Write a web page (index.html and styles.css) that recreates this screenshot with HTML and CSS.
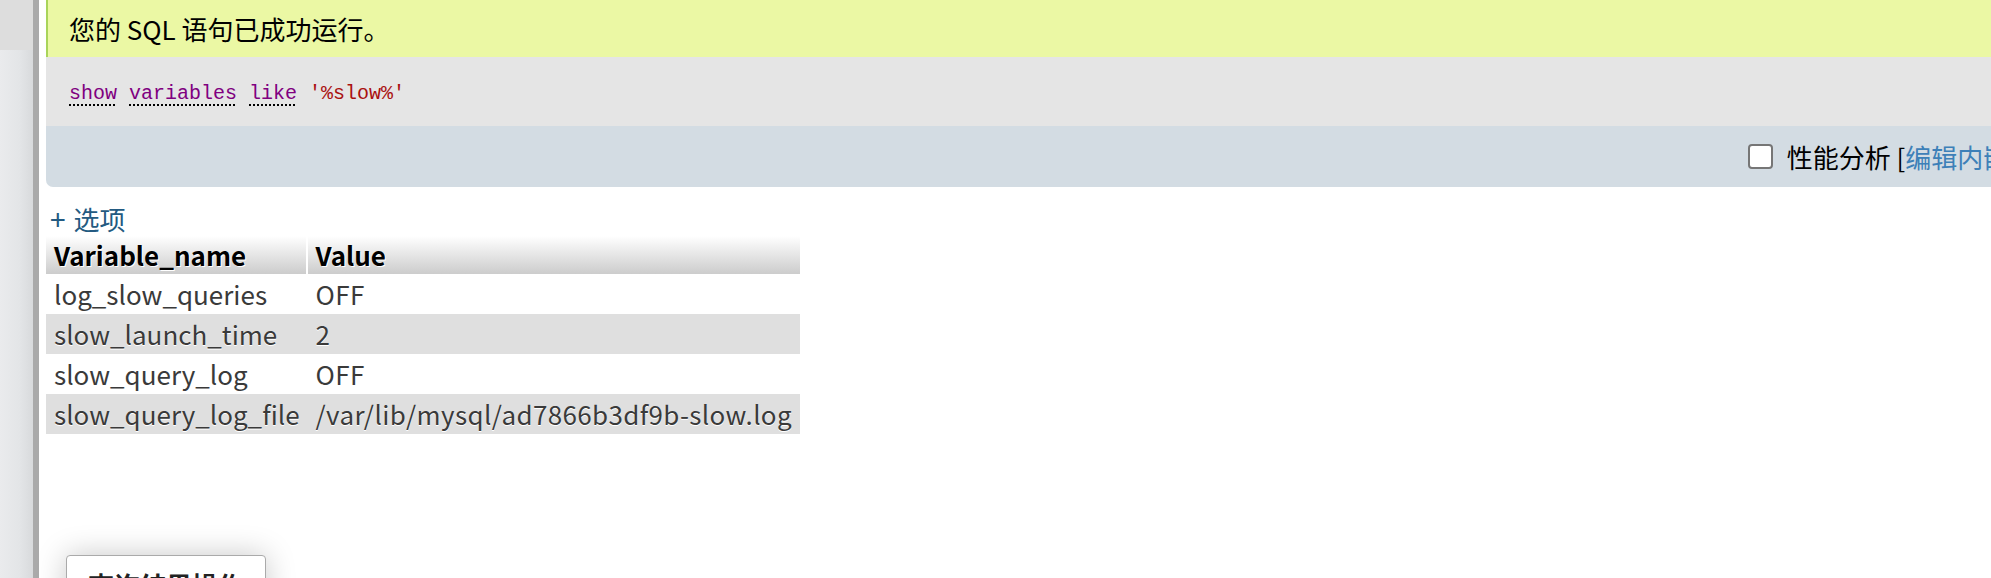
FILE: index.html
```html
<!DOCTYPE html>
<html lang="zh-CN">
<head>
<meta charset="utf-8">
<title>SQL</title>
<link rel="stylesheet" href="styles.css">
</head>
<body>
<div class="nav"><div class="nav-top"></div></div>
<div class="resizer"></div>
<div class="main">
  <div class="success">您的 SQL 语句已成功运行。</div>
  <div class="sqlbox"><span class="kw">show</span> <span class="kw">variables</span> <span class="kw">like</span> <span class="str">'%slow%'</span></div>
  <div class="tools">
    <span class="checkbox"></span>
    <span class="tools-text">性能分析 [<a class="link">编辑内嵌</a>] [<a class="link">编辑</a>] [<a class="link">解析 SQL</a>] [<a class="link">创建 PHP 代码</a>] [<a class="link">刷新</a>]</span>
  </div>
  <div class="options"><span class="plus">+</span>选项</div>
  <table class="result">
    <thead>
      <tr><th>Variable_name</th><th>Value</th></tr>
    </thead>
    <tbody>
      <tr><td>log_slow_queries</td><td>OFF</td></tr>
      <tr class="even"><td>slow_launch_time</td><td>2</td></tr>
      <tr><td>slow_query_log</td><td>OFF</td></tr>
      <tr class="even"><td>slow_query_log_file</td><td>/var/lib/mysql/ad7866b3df9b-slow.log</td></tr>
    </tbody>
  </table>
  <div class="ops"><span class="ops-title">查询结果操作</span></div>
</div>
</body>
</html>
```
FILE: styles.css
```css
html, body {
  margin: 0;
  padding: 0;
}
body {
  width: 1991px;
  height: 578px;
  overflow: hidden;
  display: flex;
  align-items: flex-start;
  background: #fff;
  font-family: "Noto Sans CJK SC", sans-serif;
  color: #000;
}
.nav {
  width: 33px;
  height: 578px;
  flex-shrink: 0;
  background: linear-gradient(to right, #eaebed, #e3e5e7 60%, #d8dadc);
}
.nav-top {
  height: 50px;
  background: #dddddd;
}
.resizer {
  width: 6px;
  height: 578px;
  flex-shrink: 0;
  background: #aaaaaa;
}
.main {
  margin-left: 7px;
  width: 2454px;
  flex-shrink: 0;
}
.success {
  background: #ebf8a4;
  border-left: 2px solid #a9d45a;
  padding: 11px 0 10px 21px;
  font-size: 26px;
  line-height: 36px;
}
.sqlbox {
  background: #e5e5e5;
  padding: 23px 0 18px 23px;
  font-family: "Liberation Mono", monospace;
  font-size: 20px;
  line-height: 28px;
}
.kw {
  color: #800080;
  text-decoration: underline dotted #000;
  text-underline-offset: 5px;
}
.str {
  color: #aa1111;
}
.tools {
  background: #d3dce3;
  height: 61px;
  border-bottom-left-radius: 7px;
  display: flex;
  justify-content: flex-end;
  align-items: center;
  padding-right: 10px;
  white-space: nowrap;
  font-size: 26px;
}
.checkbox {
  width: 21px;
  height: 21px;
  border: 2px solid #767676;
  border-radius: 4px;
  background: #fff;
  margin-right: 14px;
  flex-shrink: 0;
}
.link {
  color: #3d80b8;
}
.options {
  margin-top: 14px;
  padding-left: 4px;
  font-size: 26px;
  line-height: 34px;
  color: #235a81;
}
.plus {
  font-size: 28px;
  margin-right: 8px;
}
.result {
  border-collapse: separate;
  border-spacing: 0;
  font-size: 26px;
  line-height: 30px;
}
.result th {
  text-align: left;
  font-weight: bold;
  padding: 4px 8px;
  background: linear-gradient(to bottom, #ffffff, #cccccc);
  text-shadow: 1px 1px 0 #fff;
}
.result th:first-child {
  border-right: 2px solid #fff;
}
.result td {
  padding: 5px 8px;
  color: #3a3a3a;
  text-shadow: 0 1px 0 #fff;
}
.result td + td {
  letter-spacing: 0.35px;
}
.result tr.even td {
  background: #dfdfdf;
}
.ops {
  display: inline-block;
  margin: 121px 0 0 20px;
  padding: 12px 21px 20px;
  border: 1px solid #aaa;
  border-radius: 4px;
  background: #fff;
  box-shadow: 0 0 30px rgba(0, 0, 0, 0.22);
}
.ops-title {
  font-size: 26px;
  line-height: 34px;
  font-weight: bold;
  color: #222;
}
```
